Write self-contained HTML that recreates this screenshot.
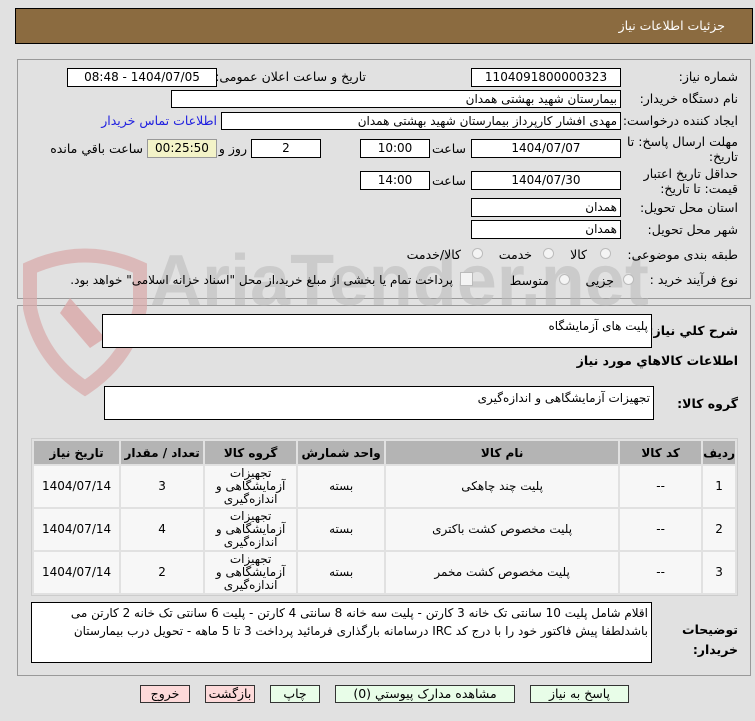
<!DOCTYPE html><html><head><meta charset="utf-8"><style>
body{margin:0;width:755px;height:721px;background:#E1E1E1;position:relative;overflow:hidden;font-family:Tahoma,"DejaVu Sans","Noto Sans CJK SC",sans-serif;font-size:12px;color:#000}
.a{position:absolute;white-space:nowrap}
.in{position:absolute;background:#fff;border:1px solid #000;box-sizing:border-box;direction:rtl;padding:0 3px;line-height:16px;font-size:12px;white-space:nowrap;overflow:hidden}
.c{text-align:center}
.l{position:absolute;direction:rtl;text-align:right;white-space:nowrap;font-size:12.5px}
.rad{position:absolute;width:11px;height:11px;border-radius:50%;border:1px solid #bbb;background:#f4f4f4;box-sizing:border-box}
table{border-collapse:separate;border-spacing:2px;position:absolute;left:31px;top:438px;width:707px;height:158px;background:#E1E1E1;border:1px solid #ccc;direction:rtl}
th{background:#B4B4B4;height:23px;font-size:12px;font-weight:bold;padding:0}
td{background:#F7F7F7;height:41px;text-align:center;font-size:12px;padding:0;line-height:13px}
.b{position:absolute;top:685px;height:18px;border:1px solid #333;box-sizing:border-box;background:#E8FDE8;text-align:center;line-height:16px;font-size:12.5px}
.p{background:#FDDADA}
</style></head><body>
<div class="a" style="left:15px;top:8px;width:738px;height:36px;background:#8B6B40;border:1px solid #000;box-sizing:border-box"></div>
<div class="l" style="right:30px;top:18px;color:#fff;font-size:12.5px">جزئیات اطلاعات نیاز</div>
<div class="a" style="left:17px;top:59px;width:734px;height:240px;border:1px solid #999;box-sizing:border-box"></div>
<div class="a" style="left:17px;top:305px;width:734px;height:371px;border:1px solid #999;box-sizing:border-box"></div>
<!-- watermark -->
<svg class="a" style="left:20px;top:248px" width="130" height="150"><path d="M10 20 Q65 -5 120 20 L120 60 Q110 110 65 140 Q20 110 10 60Z" fill="none" stroke="#D9A8A8" stroke-width="14" opacity=".7"/><path d="M50 50 L85 90 L70 100 L40 65Z" fill="#D9A8A8" opacity=".8"/></svg>
<div class="a" style="left:150px;top:240px;font-size:72px;font-weight:bold;color:#BDBDBD;opacity:.6;font-family:'Liberation Sans',sans-serif">AriaTender.net</div>

<div class="l" style="right:17px;top:69px">شماره نیاز:</div>
<div class="in c" style="left:471px;top:68px;width:150px;height:19px">1104091800000323</div>
<div class="l" style="right:389px;top:69px">تاریخ و ساعت اعلان عمومی:</div>
<div class="in c" style="left:67px;top:68px;width:150px;height:19px">1404/07/05 - 08:48</div>
<div class="l" style="right:17px;top:91px">نام دستگاه خریدار:</div>
<div class="in" style="left:171px;top:90px;width:450px;height:18px">بیمارستان شهید بهشتی همدان</div>
<div class="l" style="right:17px;top:113px">ایجاد کننده درخواست:</div>
<div class="in" style="left:221px;top:112px;width:400px;height:18px">مهدی افشار کارپرداز بیمارستان شهید بهشتی همدان</div>
<div class="l" style="right:538px;top:113px;color:#2020E0">اطلاعات تماس خریدار</div>
<div class="l" style="right:17px;top:134px;line-height:15px">مهلت ارسال پاسخ: تا<br>تاریخ:</div>
<div class="in c" style="left:471px;top:139px;width:150px;height:19px">1404/07/07</div>
<div class="l" style="right:289px;top:141px">ساعت</div>
<div class="in c" style="left:360px;top:139px;width:70px;height:19px">10:00</div>
<div class="in c" style="left:251px;top:139px;width:70px;height:19px">2</div>
<div class="l" style="right:508px;top:141px">روز و</div>
<div class="in c" style="left:147px;top:139px;width:70px;height:19px;background:#F3F3C8;border-color:#999">00:25:50</div>
<div class="l" style="right:612px;top:141px">ساعت باقي مانده</div>
<div class="l" style="right:17px;top:166px;line-height:15px">حداقل تاریخ اعتبار<br>قیمت: تا تاریخ:</div>
<div class="in c" style="left:471px;top:171px;width:150px;height:19px">1404/07/30</div>
<div class="l" style="right:289px;top:173px">ساعت</div>
<div class="in c" style="left:360px;top:171px;width:70px;height:19px">14:00</div>
<div class="l" style="right:17px;top:200px">استان محل تحویل:</div>
<div class="in" style="left:471px;top:198px;width:150px;height:19px">همدان</div>
<div class="l" style="right:17px;top:222px">شهر محل تحویل:</div>
<div class="in" style="left:471px;top:220px;width:150px;height:19px">همدان</div>
<div class="l" style="right:17px;top:247px">طبقه بندی موضوعی:</div>
<div class="rad" style="left:600px;top:248px"></div><div class="l" style="right:168px;top:247px">کالا</div>
<div class="rad" style="left:543px;top:248px"></div><div class="l" style="right:223px;top:247px">خدمت</div>
<div class="rad" style="left:472px;top:248px"></div><div class="l" style="right:294px;top:247px">کالا/خدمت</div>
<div class="l" style="right:17px;top:272px">نوع فرآیند خرید :</div>
<div class="rad" style="left:623px;top:274px"></div><div class="l" style="right:141px;top:273px">جزیی</div>
<div class="rad" style="left:559px;top:274px"></div><div class="l" style="right:206px;top:273px">متوسط</div>
<div class="a" style="left:460px;top:272px;width:11px;height:12px;border:1px solid #bbb;background:#f4f4f4"></div>
<div class="l" style="right:302px;top:273px;font-size:12px">پرداخت تمام یا بخشی از مبلغ خرید،از محل "اسناد خزانه اسلامی" خواهد بود.</div>

<div class="l" style="right:17px;top:323px;font-weight:bold">شرح كلي نياز:</div>
<div class="in" style="left:102px;top:314px;width:550px;height:34px;line-height:22px">پلیت های آزمایشگاه</div>
<div class="l" style="right:17px;top:353px;font-weight:bold">اطلاعات كالاهاي مورد نياز</div>
<div class="l" style="right:17px;top:396px;font-weight:bold">گروه كالا:</div>
<div class="in" style="left:104px;top:386px;width:550px;height:34px;line-height:22px">تجهیزات آزمایشگاهی و اندازه‌گیری</div>

<table>
<tr><th style="width:26px">ردیف</th><th style="width:81px">کد کالا</th><th style="width:232px">نام کالا</th><th style="width:86px">واحد شمارش</th><th style="width:91px">گروه کالا</th><th style="width:82px">تعداد / مقدار</th><th>تاریخ نیاز</th></tr>
<tr><td>1</td><td>--</td><td>پلیت چند چاهکی</td><td>بسته</td><td>تجهیزات<br>آزمایشگاهی و<br>اندازه‌گیری</td><td>3</td><td>1404/07/14</td></tr>
<tr><td>2</td><td>--</td><td>پلیت مخصوص کشت باکتری</td><td>بسته</td><td>تجهیزات<br>آزمایشگاهی و<br>اندازه‌گیری</td><td>4</td><td>1404/07/14</td></tr>
<tr><td>3</td><td>--</td><td>پلیت مخصوص کشت مخمر</td><td>بسته</td><td>تجهیزات<br>آزمایشگاهی و<br>اندازه‌گیری</td><td>2</td><td>1404/07/14</td></tr>
</table>

<div class="l" style="right:17px;top:620px;font-weight:bold;line-height:20px">توضیحات<br>خریدار:</div>
<div class="in" style="left:31px;top:602px;width:621px;height:61px;white-space:normal;line-height:18px;font-size:12px;padding-top:1px">اقلام شامل پلیت 10 سانتی تک خانه 3 کارتن - پلیت سه خانه 8 سانتی 4 کارتن - پلیت 6 سانتی تک خانه 2 کارتن می باشدلطفا پیش فاکتور خود را با درج کد IRC درسامانه بارگذاری فرمائید پرداخت 3 تا 5 ماهه - تحویل درب بیمارستان</div>

<div class="b" style="left:530px;width:99px">پاسخ به نیاز</div>
<div class="b" style="left:335px;width:180px">مشاهده مدارک پیوستي (0)</div>
<div class="b" style="left:270px;width:50px">چاپ</div>
<div class="b p" style="left:205px;width:50px">بازگشت</div>
<div class="b p" style="left:140px;width:50px">خروج</div>
</body></html>
